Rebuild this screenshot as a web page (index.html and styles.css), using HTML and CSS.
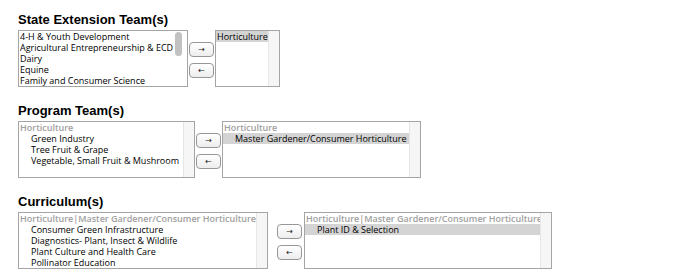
FILE: index.html
```html
<!DOCTYPE html>
<html lang="en">
<head>
  <meta charset="UTF-8" />
  <title>Team Picker</title>
  <link rel="stylesheet" href="styles.css">
</head>
<body>

  <section class="picker">
    <h3>State Extension Team(s)</h3>
    <div class="picker-row">
      <div class="listbox state-avail">
        <div class="items">
          <div class="opt">4-H &amp; Youth Development</div>
          <div class="opt">Agricultural Entrepreneurship &amp; ECD</div>
          <div class="opt">Dairy</div>
          <div class="opt">Equine</div>
          <div class="opt">Family and Consumer Science</div>
        </div>
        <div class="track plain"><span class="thumb"></span></div>
      </div>
      <div class="moves state-moves">
        <button>&rarr;</button>
        <button>&larr;</button>
      </div>
      <div class="listbox state-chosen">
        <div class="items">
          <div class="opt selected">Horticulture</div>
        </div>
        <div class="track"></div>
      </div>
    </div>
  </section>

  <section class="picker">
    <h3>Program Team(s)</h3>
    <div class="picker-row">
      <div class="listbox program-avail">
        <div class="items">
          <div class="group">Horticulture</div>
          <div class="opt sub">Green Industry</div>
          <div class="opt sub">Tree Fruit &amp; Grape</div>
          <div class="opt sub">Vegetable, Small Fruit &amp; Mushroom</div>
        </div>
        <div class="track"></div>
      </div>
      <div class="moves program-moves">
        <button>&rarr;</button>
        <button>&larr;</button>
      </div>
      <div class="listbox program-chosen">
        <div class="items">
          <div class="group">Horticulture</div>
          <div class="opt sub selected">Master Gardener/Consumer Horticulture</div>
        </div>
        <div class="track"></div>
      </div>
    </div>
  </section>

  <section class="picker">
    <h3>Curriculum(s)</h3>
    <div class="picker-row">
      <div class="listbox curr-avail">
        <div class="items">
          <div class="group">Horticulture|Master Gardener/Consumer Horticulture</div>
          <div class="opt sub">Consumer Green Infrastructure</div>
          <div class="opt sub">Diagnostics- Plant, Insect &amp; Wildlife</div>
          <div class="opt sub">Plant Culture and Health Care</div>
          <div class="opt sub">Pollinator Education</div>
        </div>
        <div class="track"></div>
      </div>
      <div class="moves curr-moves">
        <button>&rarr;</button>
        <button>&larr;</button>
      </div>
      <div class="listbox curr-chosen">
        <div class="items">
          <div class="group">Horticulture|Master Gardener/Consumer Horticulture</div>
          <div class="opt sub selected">Plant ID &amp; Selection</div>
        </div>
        <div class="track"></div>
      </div>
    </div>
  </section>

</body>
</html>
```

FILE: styles.css
```css
body {
  margin: 0;
  padding: 12px 0 0 18px;
  background: #fff;
  color: #000;
  font-family: "Open Sans", "DejaVu Sans", sans-serif;
}

h3 {
  margin: 0 0 3px;
  font: bold 13px/15px "Liberation Sans", Arial, sans-serif;
  color: #000;
}

.picker {
  margin-bottom: 16px;
}

.picker-row {
  display: flex;
  align-items: flex-start;
}

/* list boxes */
.listbox {
  display: flex;
  height: 57px;
  box-sizing: border-box;
  border: 1px solid #a5a5a5;
  background: #fff;
  overflow: hidden;
}

.listbox .items {
  flex: 1;
  min-width: 0;
}

.opt,
.group {
  font-size: 9px;
  line-height: 11px;
  height: 11px;
  padding-left: 1px;
  white-space: nowrap;
}

.group {
  color: #a0a0a0;
  font-weight: 600;
}

.opt.sub {
  padding-left: 12px;
}

.opt.selected {
  background: #d4d4d4;
}

.track {
  width: 10px;
  flex: none;
  background: #f6f6f6;
  border-left: 1px solid #e6e6e6;
}

.track.plain {
  background: #fff;
  border-left: none;
  padding: 1px 2px 0 1px;
}

.thumb {
  display: block;
  width: 7px;
  height: 24px;
  border-radius: 4px;
  background: #c1c1c1;
}

/* widths per picker */
.state-avail { width: 170px; }
.state-chosen { width: 65px; }
.program-avail { width: 177px; }
.program-chosen { width: 199px; }
.curr-avail { width: 250px; }
.curr-chosen { width: 248px; }

/* move buttons */
.moves {
  display: flex;
  flex-direction: column;
  gap: 6px;
  padding-top: 12px;
}

.state-moves { margin: 0 1px; }
.program-moves { margin: 0 1px; }
.curr-moves { margin: 0 2px 0 9px; }

.moves button {
  width: 25px;
  height: 15px;
  padding: 0;
  border: 1px solid #979797;
  border-radius: 4px;
  background: linear-gradient(#ffffff, #ededed);
  font: 8px/13px "DejaVu Sans", sans-serif;
  color: #222;
  cursor: pointer;
}
```
